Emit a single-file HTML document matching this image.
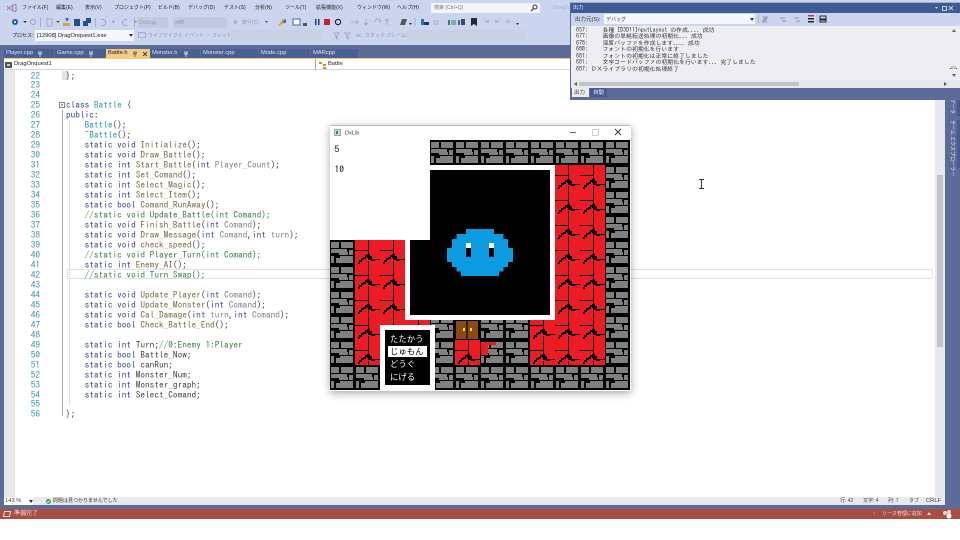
<!DOCTYPE html>
<html><head><meta charset="utf-8"><style>
html,body{margin:0;padding:0;background:#fff}
#r{position:relative;width:960px;height:540px;overflow:hidden;background:#fff;font-family:"Liberation Sans","Noto Sans CJK JP",sans-serif}
#r div,#r span.a{position:absolute}
.t{position:absolute;font-size:5.8px;line-height:8px;color:#222;white-space:nowrap;font-family:"Liberation Sans","Noto Sans CJK JP",sans-serif}
.j{font-size:5px}
.tab{position:absolute;top:49px;height:9px;background:#4a5f93;color:#dfe5f3;font-size:5.8px;line-height:9px;padding-left:2px;box-sizing:border-box;white-space:nowrap}
pre{position:absolute;margin:0;font-family:"IPAGothic",monospace;font-size:9.3px;line-height:9.97px;white-space:pre;color:#222}
.k{color:#33468c}.c{color:#2b91af}.f{color:#7a6a40}.p{color:#808080}.m{color:#3c7a45}.o{color:#444}
.sep{position:absolute;width:1px;background:#a5afc8}
.ic{position:absolute}
</style></head><body><div id="r">
<!-- main chrome -->
<div style="left:0;top:0;width:960px;height:45px;background:#ccd5f0"></div>
<div style="left:0;top:45px;width:960px;height:464px;background:#5d6b99"></div>
<div style="left:0;top:509px;width:960px;height:10px;background:#a84e42"></div>

<!-- menu -->
<svg class="ic" style="left:6px;top:3px" width="11" height="10" viewBox="0 0 11 10"><path d="M1 3l2 2-2 2M3 5l4-3v6zM8 1l2 1v6l-2 1" fill="none" stroke="#68217a" stroke-opacity=".5" stroke-width="1"/></svg>
<span class="t j" style="left:22px;top:4px">ファイル(F)</span>
<span class="t j" style="left:56px;top:4px">編集(E)</span>
<span class="t j" style="left:85px;top:4px">表示(V)</span>
<span class="t j" style="left:114px;top:4px">プロジェクト(P)</span>
<span class="t j" style="left:158px;top:4px">ビルド(B)</span>
<span class="t j" style="left:188px;top:4px">デバッグ(D)</span>
<span class="t j" style="left:224px;top:4px">テスト(S)</span>
<span class="t j" style="left:255px;top:4px">分析(N)</span>
<span class="t j" style="left:285px;top:4px">ツール(T)</span>
<span class="t j" style="left:316px;top:4px">拡張機能(X)</span>
<span class="t j" style="left:357px;top:4px">ウィンドウ(W)</span>
<span class="t j" style="left:397px;top:4px">ヘルプ(H)</span>
<div style="left:431px;top:3px;width:109px;height:10px;background:#f4f6fc"></div>
<span class="t j" style="left:434px;top:4px;color:#777">検索 (Ctrl+Q)</span>
<svg class="ic" style="left:530px;top:4px" width="8" height="8" viewBox="0 0 8 8"><circle cx="5" cy="3" r="2" fill="none" stroke="#333"/><path d="M3.5 4.5L1 7" stroke="#333" stroke-width="1.2"/></svg>
<span class="t" style="left:553px;top:4px;color:#a9b2cc">DragO</span>

<!-- toolbar row 2 -->
<svg class="ic" style="left:6px;top:17px" width="560" height="11" viewBox="0 0 560 11">
<circle cx="9" cy="5" r="3" fill="#1e5c9c"/><circle cx="9" cy="5" r="1" fill="#fff"/>
<path d="M17 4h4l-2 2z" fill="#333"/>
<circle cx="27" cy="5" r="2.5" fill="none" stroke="#9aa2b8"/>
<rect x="41" y="2" width="5" height="7" fill="none" stroke="#a5adc0"/>
<path d="M50 4h4l-2 2z" fill="#555"/>
<path d="M57 6h7v3h-7z" fill="#d9a441"/><path d="M59 1h4l-2 4z" fill="#2a6fb5"/>
<rect x="68" y="2" width="6" height="7" fill="#1d4f91"/>
<rect x="77" y="4" width="5" height="5" fill="#1d4f91"/><rect x="80" y="1" width="5" height="5" fill="#1d4f91"/>
<path d="M95 3a3 3 0 1 1 0 5" fill="none" stroke="#9aa2b8"/><path d="M106 4h3l-1.500 2z" fill="#888"/>
<path d="M121 3a3 3 0 1 0 0 5" fill="none" stroke="#9aa2b8"/><path d="M128 4h3l-1.500 2z" fill="#888"/>
<path d="M228 2l4 3-4 3z" fill="#a5adc0"/>
<path d="M259 4h3l-1.500 2z" fill="#555"/>
<path d="M272 8l4-4v-2h3l1 4-4 1-3 2z" fill="#d9a441"/><path d="M276 5l4-3v4z" fill="#2a6fb5"/>
<rect x="287" y="2" width="7" height="6" fill="#fff" stroke="#3d6f8f"/>
<rect x="297" y="6" width="4" height="3" fill="#555"/>
<rect x="309" y="2" width="1.500" height="6" fill="#1b3f8b"/><rect x="312" y="2" width="1.500" height="6" fill="#1b3f8b"/>
<rect x="318" y="2" width="6" height="6" fill="#c5222c"/>
<circle cx="332" cy="5" r="2.600" fill="none" stroke="#222" stroke-width="1.200"/>
<path d="M345 5h7M350 3l2 2-2 2" fill="none" stroke="#a5adc0"/>
<path d="M360 2v6M358 6l2 2 2-2" fill="none" stroke="#a5adc0"/>
<path d="M369 5a3 3 0 0 1 6 0M375 5l-2-1" fill="none" stroke="#a5adc0"/>
<path d="M381 8V2M379 4l2-2 2 2" fill="none" stroke="#a5adc0"/>
<path d="M394 8l2-6h5l-2 6z" fill="#555"/><path d="M403 6h3l-1.500 2z" fill="#333"/>
<rect x="408" y="1" width="2" height="8" fill="#bcc3d6"/>
<rect x="415" y="2" width="3" height="6" fill="#2a6fb5"/><rect x="418" y="5" width="5" height="3" fill="#336"/>
<rect x="427" y="3" width="6" height="5" fill="#bcc3d6"/>
<rect x="442" y="3" width="2" height="5" fill="#3a7f75"/><rect x="445" y="3" width="5" height="5" fill="#8aa"/>
<rect x="452" y="3" width="2" height="5" fill="#2a6fb5"/><rect x="455" y="2" width="4" height="6" fill="#446"/>
<path d="M465 1h6v8l-3-2-3 2z" fill="#26282f"/>
<path d="M479 3h4v3h-4zM489 3h4v3h-4zM500 3h4v3h-4z" fill="#b3bbd0"/>
<path d="M510 6h3l-1.500 2z" fill="#333"/>
</svg>
<div class="sep" style="left:40px;top:18px;height:9px"></div>
<div class="sep" style="left:95px;top:18px;height:9px"></div>
<div class="sep" style="left:134px;top:18px;height:9px"></div>
<div style="left:137px;top:17px;width:31px;height:11px;background:#c2cade"></div>
<span class="t" style="left:139px;top:19px;color:#939bb0">Debug</span>
<div style="left:173px;top:17px;width:54px;height:11px;background:#c2cade"></div>
<span class="t" style="left:175px;top:19px;color:#939bb0">x86</span>
<span class="t j" style="left:242px;top:19px;color:#8f97ac">続行(C)</span>

<!-- toolbar row 3 -->
<span class="t j" style="left:12px;top:32px">プロセス:</span>
<div style="left:35px;top:30px;width:99px;height:11px;background:#f5f7fd"></div>
<span class="t" style="left:37px;top:32px;color:#222">[12908] DragOnquest1.exe</span>
<svg class="ic" style="left:129px;top:34px" width="5" height="4"><path d="M0 0h4l-2 3z" fill="#333"/></svg>
<svg class="ic" style="left:138px;top:31px" width="8" height="9"><rect x=".5" y="1.500" width="7" height="5" fill="none" stroke="#a5adc0"/></svg>
<span class="t j" style="left:148px;top:32px;color:#8f97ac">ライフサイクル イベント ・ スレッド:</span>
<div style="left:230px;top:30px;width:92px;height:11px;background:#c8d0e4"></div>
<svg class="ic" style="left:333px;top:31px" width="30" height="9"><path d="M1 2h5L4 5v3L3 7V5zM12 2h5l-2 3v3l-1-1V5zM23 3l5 3M28 3l-5 3" fill="none" stroke="#a5adc0"/></svg>
<span class="t j" style="left:365px;top:32px;color:#8f97ac">スタック フレーム:</span>
<div style="left:407px;top:30px;width:118px;height:11px;background:#c8d0e4"></div>

<!-- tabs -->
<div class="tab" style="left:4px;width:50px">Player.cpp</div>
<div class="tab" style="left:55px;width:51px">Game.cpp</div>
<div class="tab" style="left:106px;width:44px;background:#f5cc84;color:#222">Battle.h</div>
<div class="tab" style="left:150px;width:50px">Monster.h</div>
<div class="tab" style="left:201px;width:57px">Monster.cpp</div>
<div class="tab" style="left:259px;width:51px">Mode.cpp</div>
<div class="tab" style="left:311px;width:47px">MARcpp</div>
<svg class="ic" style="left:37px;top:51px" width="6" height="6"><path d="M1 1h4M2 1v2M4 1v2M1 3h4M3 3v3" stroke="#dfe5f3" fill="none" stroke-width=".8"/></svg>
<svg class="ic" style="left:88px;top:51px" width="6" height="6"><path d="M1 1h4M2 1v2M4 1v2M1 3h4M3 3v3" stroke="#dfe5f3" fill="none" stroke-width=".8"/></svg>
<svg class="ic" style="left:132px;top:51px" width="6" height="6"><path d="M1 1h4M2 1v2M4 1v2M1 3h4M3 3v3" stroke="#555" fill="none" stroke-width=".8"/></svg>
<svg class="ic" style="left:142px;top:51px" width="6" height="6"><path d="M1 1l4 4M5 1l-4 4" stroke="#444" fill="none"/></svg>
<svg class="ic" style="left:183px;top:51px" width="6" height="6"><path d="M1 1h4M2 1v2M4 1v2M1 3h4M3 3v3" stroke="#dfe5f3" fill="none" stroke-width=".8"/></svg>
<div style="left:4px;top:58px;width:931px;height:1px;background:#f5cc84"></div>

<!-- nav bar -->
<div style="left:4px;top:59px;width:931px;height:11px;background:#fff;border-bottom:1px solid #ccd5f0;box-sizing:border-box"></div>
<div style="left:315px;top:59px;width:1px;height:11px;background:#9aa"></div>
<svg class="ic" style="left:5px;top:61px" width="8" height="8"><rect x="0" y="1" width="7" height="6" fill="#555"/><rect x="2" y="3" width="3" height="2" fill="#dbe"/></svg>
<span class="t" style="left:14px;top:60px;color:#222">DragOnquest1</span>
<span class="t" style="left:328px;top:60px;color:#222">Battle</span>
<svg class="ic" style="left:319px;top:61px" width="9" height="8"><rect x="0" y="1" width="3" height="2" fill="#c98a2e"/><rect x="4" y="3" width="3" height="2" fill="#c98a2e"/><rect x="4" y="6" width="3" height="2" fill="#c98a2e"/></svg>

<!-- editor -->
<div style="left:4px;top:70px;width:11px;height:427px;background:#e6e7e8"></div>
<div style="left:15px;top:70px;width:920px;height:427px;background:#fff"></div>
<div style="left:67px;top:269px;width:866px;height:10px;border:1px solid #e2e2e2;box-sizing:border-box"></div>
<div style="left:62px;top:110px;width:1px;height:306px;background:#a5a5a5"></div>
<div style="left:69px;top:120px;width:0;height:285px;border-left:1px dotted #c8c8c8"></div>
<div style="left:62px;top:71px;width:6px;height:9px;background:#e2e2e2"></div>
<svg class="ic" style="left:58px;top:101px" width="8" height="8"><rect x="1.500" y="1.500" width="5" height="5" fill="#fff" stroke="#888"/><path d="M3 4h2" stroke="#555"/></svg>
<pre class="c" style="left:26px;top:71.500px;width:14px;text-align:right;color:#2b91af">22
23
24
25
26
27
28
29
30
31
32
33
34
35
36
37
38
39
40
41
42
43
44
45
46
47
48
49
50
51
52
53
54
55
56</pre>
<pre class="o" style="left:66px;top:71.500px">};


<span class="k">class</span> <span class="c">Battle</span> {
<span class="k">public</span>:
    <span class="c">Battle</span>();
    ~<span class="c">Battle</span>();
    <span class="k">static void</span> <span class="f">Initialize</span>();
    <span class="k">static void</span> <span class="f">Draw_Battle</span>();
    <span class="k">static int</span> <span class="f">Start_Battle</span>(<span class="k">int</span> <span class="p">Player_Count</span>);
    <span class="k">static int</span> <span class="f">Set_Comand</span>();
    <span class="k">static int</span> <span class="f">Select_Magic</span>();
    <span class="k">static int</span> <span class="f">Select_Item</span>();
    <span class="k">static bool</span> <span class="f">Comand_RunAway</span>();
    <span class="m">//static void Update_Battle(int Comand);</span>
    <span class="k">static void</span> <span class="f">Finish_Battle</span>(<span class="k">int</span> <span class="p">Comand</span>);
    <span class="k">static void</span> <span class="f">Draw_Message</span>(<span class="k">int</span> <span class="p">Comand</span>,<span class="k">int</span> <span class="p">turn</span>);
    <span class="k">static void</span> <span class="f">check_speed</span>();
    <span class="m">//static void Player_Turn(int Comand);</span>
    <span class="k">static int</span> <span class="f">Enemy_AI</span>();
    <span class="m">//static void Turn_Swap();</span>

    <span class="k">static void</span> <span class="f">Update_Player</span>(<span class="k">int</span> <span class="p">Comand</span>);
    <span class="k">static void</span> <span class="f">Update_Monster</span>(<span class="k">int</span> <span class="p">Comand</span>);
    <span class="k">static void</span> <span class="f">Cal_Damage</span>(<span class="k">int</span> <span class="p">turn</span>,<span class="k">int</span> <span class="p">Comand</span>);
    <span class="k">static bool</span> <span class="f">Check_Battle_End</span>();

    <span class="k">static int</span> Turn;<span class="m">//0:Enemy 1:Player</span>
    <span class="k">static bool</span> Battle_Now;
    <span class="k">static bool</span> canRun;
    <span class="k">static int</span> Monster_Num;
    <span class="k">static int</span> Monster_graph;
    <span class="k">static int</span> Select_Comand;

};</pre>

<!-- I-beam cursor -->
<svg class="ic" style="left:698px;top:179px" width="7" height="10"><path d="M1 .5h5M1 9.500h5M3.500 .5v9" stroke="#333"/></svg>

<!-- right scrollbar -->
<div style="left:935px;top:100px;width:10px;height:397px;background:#e8e8ec"></div>
<div style="left:937px;top:175px;width:6px;height:172px;background:#c2c3c9"></div>
<div style="left:945px;top:98px;width:15px;height:411px;background:#5d6b99"></div>
<div style="left:935px;top:98px;width:10px;height:2px;background:#5d6b99"></div>
<div style="left:957px;top:98px;width:3px;height:18px;background:#4a5a8c"></div>
<div style="left:957px;top:120px;width:3px;height:48px;background:#4a5a8c"></div>
<span class="t j" style="left:948px;top:99px;writing-mode:vertical-rl;text-orientation:sideways;color:#e6e9f3">データ</span>
<span class="t j" style="left:948px;top:120px;writing-mode:vertical-rl;text-orientation:sideways;color:#e6e9f3">チーム エクスプローラー</span>

<!-- bottom status -->
<div style="left:4px;top:497px;width:941px;height:8px;background:#e9eaf0"></div>
<div style="left:4px;top:497px;width:29px;height:8px;background:#fff"></div>
<span class="t" style="left:5px;top:497px;color:#444">143 %</span>
<svg class="ic" style="left:29px;top:500px" width="4" height="3"><path d="M0 0h4l-2 3z" fill="#333"/></svg>
<svg class="ic" style="left:45px;top:498px" width="7" height="7"><circle cx="3.500" cy="3.500" r="2.500" fill="#2d9e4f"/><path d="M2 3.500l1 1 2-2" stroke="#fff" fill="none" stroke-width=".8"/></svg>
<span class="t j" style="left:53px;top:497px;color:#333">問題は見つかりませんでした</span>
<span class="t j" style="left:840px;top:497px;color:#444">行: 42</span>
<span class="t j" style="left:863px;top:497px;color:#444">文字: 4</span>
<span class="t j" style="left:888px;top:497px;color:#444">列: 7</span>
<span class="t j" style="left:909px;top:497px;color:#444">タブ</span>
<span class="t" style="left:926px;top:497px;color:#444">CRLF</span>
<svg class="ic" style="left:2px;top:510px" width="9" height="8"><path d="M2.500 1.500h6l-1 5h-6z" fill="none" stroke="#f0d8d4"/></svg>
<span class="t" style="left:14px;top:510px;color:#f2dcd8;font-size:6px">準備完了</span>
<span class="t j" style="left:873px;top:510px;color:#f2dcd8">↑</span>
<span class="t j" style="left:882px;top:510px;color:#f2dcd8">ソース管理に追加</span>
<svg class="ic" style="left:927px;top:512px" width="5" height="4"><path d="M0 3h4L2 0z" fill="#f2dcd8"/></svg>
<svg class="ic" style="left:941px;top:509px" width="12" height="10"><circle cx="4" cy="4" r="2" fill="#e8d5d2"/><circle cx="8" cy="3" r="2" fill="#e8d5d2"/><circle cx="8" cy="7" r="2.500" fill="#fff"/></svg>

<!-- output window -->
<div style="left:570px;top:2px;width:390px;height:97px;background:#5d6b99;border-top:1px solid #aab"></div>
<div style="left:571px;top:3px;width:389px;height:10px;background:#3e5b96"></div>
<span class="t" style="left:573px;top:4px;color:#eef;font-size:5.200px">出力</span>
<svg class="ic" style="left:935px;top:5px" width="20" height="7"><path d="M0 2h3L1.500 4z" fill="#c5cfe8"/><rect x="7.500" y="1.500" width="4" height="4" fill="none" stroke="#c5cfe8"/><path d="M14 1l4 4M18 1l-4 4" stroke="#c5cfe8"/></svg>
<div style="left:571px;top:13px;width:389px;height:13px;background:#ccd5f0"></div>
<span class="t" style="left:575px;top:16px;color:#333;font-size:5.500px">出力元(S):</span>
<div style="left:604px;top:14px;width:151px;height:10px;background:#f6f7fc"></div>
<span class="t j" style="left:606px;top:16px;color:#333">デバッグ</span>
<svg class="ic" style="left:750px;top:18px" width="5" height="4"><path d="M0 0h4l-2 3z" fill="#333"/></svg>
<svg class="ic" style="left:758px;top:14px" width="70" height="11"><path d="M5 2h4v7H5zM22 3h5v2h-5zM36 3h5v2h-5z" fill="#a9b2c8"/><path d="M24 6h4v2h-4zM38 6h4v2h-4z" fill="#a9b2c8"/><path d="M4 8l6-5" stroke="#8a93aa"/><rect x="0" y="0" width="1" height="9" fill="#aeb7cc"/><rect x="50" y="1" width="6" height="1.500" fill="#c83a35"/><rect x="50" y="4" width="6" height="1.500" fill="#222"/><rect x="50" y="7" width="6" height="1.500" fill="#222"/><path d="M59 0v9" stroke="#aeb7cc"/><rect x="62" y="2" width="6" height="3" fill="none" stroke="#222"/><rect x="62" y="6" width="6" height="2" fill="none" stroke="#222"/></svg>
<div style="left:571px;top:26px;width:389px;height:62px;background:#eeeef2"></div>
<pre style="left:576px;top:26.500px;font-size:5.900px;line-height:6.600px;color:#333;height:53px;overflow:hidden">
657:     各種 ID3D11InputLayout の作成.... 成功
677:     画像の単純転送処理の初期化... 成功
678:     深度バッファを作成します.... 成功
680:     フォントの初期化を行います
681:     フォントの初期化は正常に終了しました
681:     文字コードバッファの初期化を行います... 完了しました
687: ＤＸライブラリの初期化処理終了</pre>
<div style="left:571px;top:80px;width:389px;height:8px;background:#e8e8ec"></div>
<div style="left:579px;top:82px;width:220px;height:4px;background:#c2c3c9"></div>
<svg class="ic" style="left:574px;top:82px" width="3" height="4"><path d="M3 0v4L0 2z" fill="#555"/></svg>
<svg class="ic" style="left:944px;top:82px" width="3" height="4"><path d="M0 0v4l3-2z" fill="#555"/></svg>
<div style="left:950px;top:68px;width:7px;height:1px;background:#2a3a9a"></div>
<div style="left:951px;top:66px;width:5px;height:3px;background:#c2c3c9"></div>
<svg class="ic" style="left:952px;top:29px" width="4" height="3"><path d="M0 3h4L2 0z" fill="#666"/></svg>
<svg class="ic" style="left:952px;top:74px" width="4" height="3"><path d="M0 0h4L2 3z" fill="#666"/></svg>
<div style="left:571px;top:88px;width:389px;height:10px;background:#5d6b99"></div>
<div style="left:572px;top:88px;width:17px;height:9px;background:#eeeef2"></div>
<span class="t" style="left:574px;top:88.500px;color:#333;font-size:5.500px">出力</span>
<div style="left:590px;top:88px;width:17px;height:9px;background:#475a8c"></div>
<span class="t" style="left:593px;top:88.500px;color:#dfe5f3;font-size:5.500px">自動</span>

<!-- game window -->
<div style="left:330px;top:125px;width:301px;height:266px;box-shadow:0 2px 8px rgba(0,0,0,.35)"></div>
<svg class="ic" style="left:330px;top:125px" width="301" height="266" viewBox="330 125 301 266" shape-rendering="crispEdges">
<defs>
<pattern id="b" patternUnits="userSpaceOnUse" x="330" y="140" width="25" height="25">
<rect width="25" height="25" fill="#000"/>
<path d="M1 2h8v6H1zM11 2h12v6H11zM1 9h16v3h1v3h-9v-2H1zM19 10h4v5h-4zM1 16h3v7H1zM6 18h4v-2h13v7H6z" fill="#808080"/>
</pattern>
<pattern id="w" patternUnits="userSpaceOnUse" x="330" y="140" width="25" height="25">
<rect width="25" height="25" fill="#ed1c24"/>
<path d="M0 10h13v1H0zM13 0h1v15h-1zM13 21h1v4h-1zM16 19h9v1h-9zM12 14h3v2h2v3h3v2h-4v-1h-3v-2h-1zM10 15h3v2h-3zM8 17h3v2H8zM6 18h3v2H6zM4 20h3v2H4zM3 22h2v2H3z" fill="#000"/>
</pattern>
</defs>
<rect x="330" y="125" width="300" height="265" fill="#fff"/>
<rect x="330" y="125" width="300" height="1" fill="#bbb"/>
<rect x="430" y="140" width="200" height="25" fill="url(#b)"/>
<rect x="605" y="165" width="25" height="225" fill="url(#b)"/>
<rect x="330" y="365" width="300" height="25" fill="url(#b)"/>
<rect x="330" y="240" width="25" height="150" fill="url(#b)"/>
<rect x="355" y="240" width="75" height="125" fill="url(#w)"/>
<rect x="555" y="165" width="50" height="200" fill="url(#w)"/>
<rect x="530" y="315" width="25" height="50" fill="url(#w)"/>
<rect x="430" y="315" width="100" height="50" fill="url(#b)"/>
<rect x="455" y="315" width="25" height="25" fill="#000"/>
<rect x="456" y="321" width="22" height="18" fill="#8b4a14"/>
<rect x="466" y="321" width="2" height="18" fill="#3a2008"/>
<rect x="463" y="328" width="2" height="3" fill="#ffe030"/><rect x="470" y="328" width="2" height="3" fill="#ffe030"/>
<rect x="455" y="340" width="25" height="25" fill="url(#w)"/>
<rect x="481" y="342" width="15" height="3" fill="#ed1c24"/><rect x="481" y="345" width="7" height="10" fill="#ed1c24"/>
<!-- battle panel -->
<rect x="405" y="240" width="150" height="80" fill="#fff"/>
<rect x="430" y="165" width="125" height="80" fill="#fff"/>
<rect x="430" y="170" width="120" height="145" fill="#000"/>
<rect x="410" y="240" width="140" height="75" fill="#000"/>
<!-- slime -->
<path d="M466 229h28v5h9.500v5h4.500v9h5v14h-5v5h-4.500v4.500H499V276H461v-4.500h-4.500V267H452v-5h-5V248h5v-9h4.500v-5H466z" fill="#0a9be2"/>
<rect x="466" y="243" width="5" height="5" fill="#fff"/><rect x="466" y="248" width="5" height="9" fill="#000"/>
<rect x="489" y="243" width="5" height="5" fill="#fff"/><rect x="489" y="248" width="5" height="9" fill="#000"/>
<!-- command menu -->
<rect x="380" y="325" width="55" height="65" fill="#fff"/>
<rect x="385" y="330" width="45" height="55" fill="#000"/>
<rect x="388" y="346" width="39" height="11" fill="#fff"/>
<g font-family="'Noto Sans CJK JP','IPAGothic',sans-serif" font-size="8.400" shape-rendering="auto">
<text x="390" y="342" fill="#fff">たたかう</text>
<text x="390" y="354.500" fill="#000">じゅもん</text>
<text x="390" y="367" fill="#fff">どうぐ</text>
<text x="390" y="380" fill="#fff">にげる</text>
</g>
<g shape-rendering="auto">
<text x="334.500" y="152.500" font-family="IPAGothic,monospace" font-size="9.500" fill="#000">5</text>
<text x="334.500" y="172.500" font-family="IPAGothic,monospace" font-size="9.500" fill="#000">10</text>
<text x="345" y="134.500" font-family="'Liberation Sans',sans-serif" font-size="5.600" fill="#333">DxLib</text>
</g>
<rect x="334.500" y="129.500" width="6" height="6" fill="#cfe0e8" stroke="#8aa"/>
<rect x="336" y="131" width="2" height="3" fill="#2a7f7f"/>
<rect x="570" y="132" width="6" height="1" fill="#666"/>
<rect x="592.500" y="129.500" width="6" height="6" fill="none" stroke="#d0d0d0"/>
<path d="M615 129l6 6M621 129l-6 6" stroke="#333" shape-rendering="auto"/>
</svg>
</div></body></html>
